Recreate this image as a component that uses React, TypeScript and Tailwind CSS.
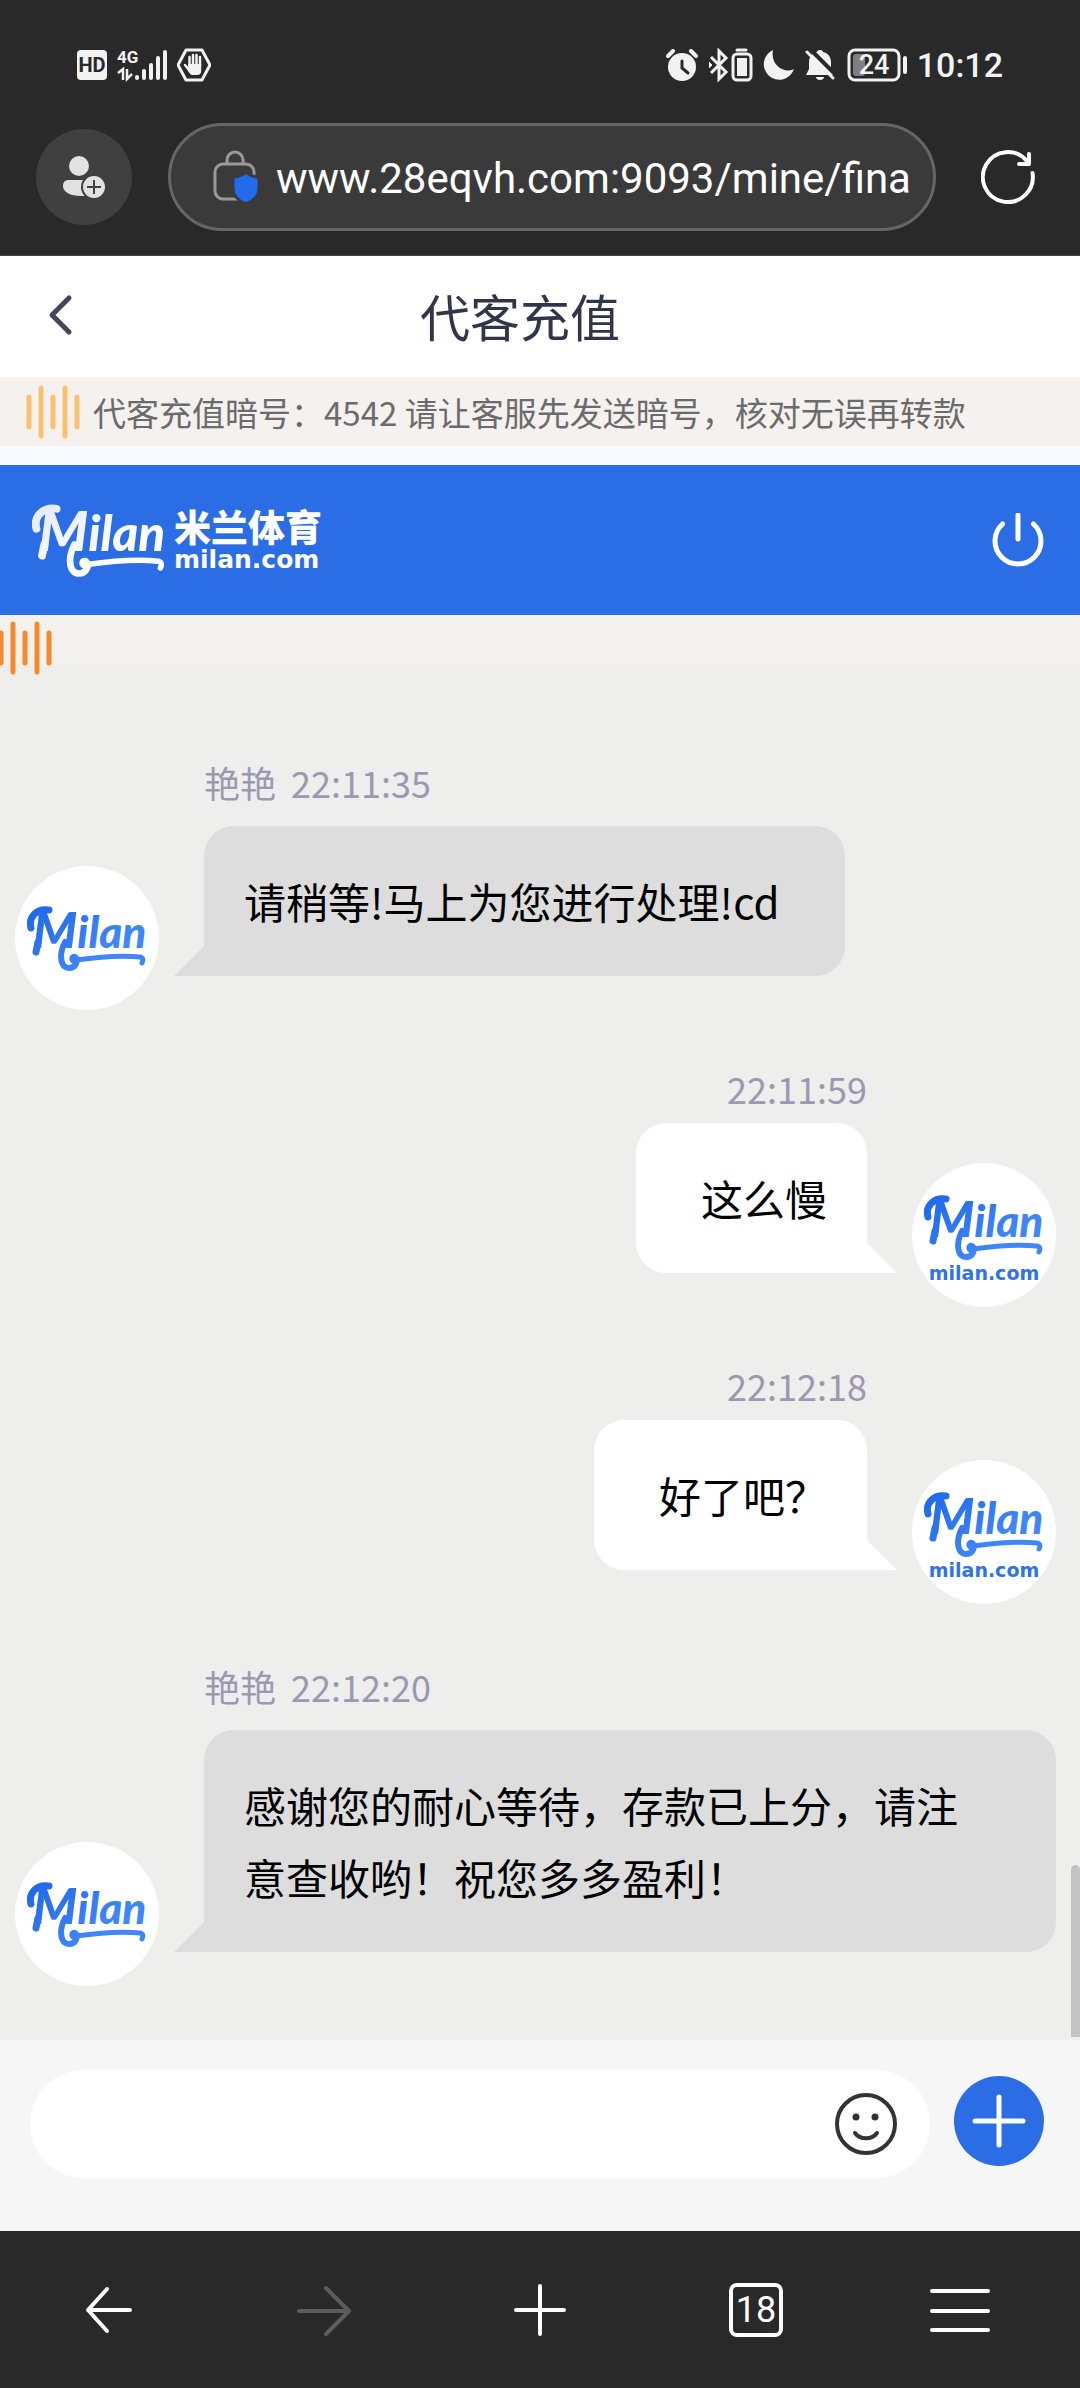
type Message = {
  id: number;
  from: "agent" | "me";
  name?: string;
  time: string;
  text: string;
};

const messages: Message[] = [
  { id: 1, from: "agent", name: "艳艳", time: "22:11:35", text: "请稍等!马上为您进行处理!cd" },
  { id: 2, from: "me", time: "22:11:59", text: "这么慢" },
  { id: 3, from: "me", time: "22:12:18", text: "好了吧？" },
  { id: 4, from: "agent", name: "艳艳", time: "22:12:20", text: "感谢您的耐心等待，存款已上分，请注意查收哟！祝您多多盈利！" },
];

function MilanMark({ className, fill }: { className: string; fill: string }) {
  return (
    <svg viewBox="0 -8 120 84" className={className} fill={fill} role="img" aria-label="Milan">
      <defs>
        <linearGradient id="milan-blue" gradientUnits="userSpaceOnUse" x1="0" y1="0" x2="50" y2="68">
          <stop offset="0" stopColor="#1b66ea" />
          <stop offset="1" stopColor="#4087f5" />
        </linearGradient>
        <linearGradient id="milan-white" gradientUnits="userSpaceOnUse" x1="0" y1="0" x2="50" y2="68">
          <stop offset="0" stopColor="#e3eafa" />
          <stop offset="1" stopColor="#ffffff" />
        </linearGradient>
      </defs>
      <text x="6" y="44" fontFamily="Lato, sans-serif" fontWeight="900" fontStyle="italic" fontSize="44">
        <tspan fontSize="50">M</tspan>
        <tspan>ilan</tspan>
      </text>
      <g fill="none" stroke={fill} strokeLinecap="round" strokeLinejoin="round">
        <path d="M4 24C1 13 10 4 22 6" strokeWidth="7" />
        <path d="M11 38L9 48" strokeWidth="7" />
        <path d="M38 38C31 52 34 64 42 64C49 64 52 56 48 53C45 52 44 56 48 57" strokeWidth="6" />
        <path d="M49 56C70 53 95 51 113 53C117 54 116 57 115 59" strokeWidth="5" />
      </g>
    </svg>
  );
}

function Avatar({ withDomain }: { withDomain?: boolean }) {
  return (
    <div className="flex h-36 w-36 shrink-0 flex-col items-center justify-center rounded-full bg-white">
      <MilanMark className="h-[84px] w-[120px]" fill="url(#milan-blue)" />
      {withDomain ? (
        <span className="-mt-2 text-[19px] leading-6 font-bold text-[#2f73e6] font-['DejaVu_Sans',sans-serif]">milan.com</span>
      ) : null}
    </div>
  );
}

function SoundBars({ color, className }: { color: string; className: string }) {
  return (
    <svg viewBox="0 0 54 54" className={className} stroke={color} strokeWidth="5" strokeLinecap="round" aria-hidden="true">
      <path d="M3 12v30M15 3v48M27 12v30M39 3v48M51 12v30" />
    </svg>
  );
}

function StatusBar() {
  return (
    <div className="flex h-[123px] items-center justify-between px-[77px] pt-[7px] text-[#f2f2f2]">
      <div className="flex items-center">
        <span className="flex h-[30px] w-[30px] items-center justify-center rounded bg-[#f2f2f2] text-[20px] leading-none font-bold text-[#292929]">
          HD
        </span>
        <svg viewBox="0 0 52 34" className="ml-[10px] h-[34px] w-[52px]" aria-hidden="true">
          <text x="0" y="15" fontSize="17" fontWeight="700" fill="currentColor" fontFamily="Roboto, sans-serif">4G</text>
          <g stroke="currentColor" strokeLinecap="round" strokeWidth="4" fill="none">
            <path d="M20 29v1M27 23v7M34 17v13M41 10v20M48 4v26" />
          </g>
          <path d="M1 25l5-4v11M10 21v10l5-5" stroke="currentColor" strokeWidth="2.500" fill="none" />
        </svg>
        <svg viewBox="0 0 34 34" className="ml-2 h-[34px] w-[34px]" fill="none" stroke="currentColor" strokeLinecap="round" strokeLinejoin="round" aria-hidden="true">
          <path d="M9 2h16l8 15-8 15H9L1 17z" strokeWidth="3" />
          <path d="M12.500 17V9M16 16V7M19.500 16V7M23 17V9M12 22l-4-5" strokeWidth="2.500" />
          <path d="M11.500 16h12.700v7c0 3-2 4-4 4h-4c-3 0-4-2-6-6z" fill="currentColor" stroke="none" />
        </svg>
      </div>
      <div className="flex items-center">
        <svg viewBox="0 0 32 32" className="h-8 w-8" aria-hidden="true">
          <circle cx="16" cy="18" r="14" fill="currentColor" />
          <path d="M2 7l5-5M30 7l-5-5" stroke="currentColor" strokeWidth="4" strokeLinecap="round" />
          <path d="M16 12v7l6 5" stroke="#292929" strokeWidth="3" strokeLinecap="round" fill="none" />
        </svg>
        <svg viewBox="0 0 44 34" className="ml-[11px] h-[34px] w-11" fill="none" stroke="currentColor" aria-hidden="true">
          <path d="M2 9l15 15-7 7V3l7 7L2 25" strokeWidth="3" />
          <path d="M0 14l3 3-3 3z" fill="currentColor" strokeWidth="1" />
          <path d="M28 2h9" strokeWidth="3" strokeLinecap="round" />
          <rect x="24" y="6" width="18" height="26" rx="4" strokeWidth="3" />
          <rect x="28" y="10" width="10" height="18" fill="currentColor" stroke="none" />
        </svg>
        <svg viewBox="0 0 32 32" className="ml-[9px] h-8 w-8" fill="currentColor" aria-hidden="true">
          <path d="M11 1A15.500 15.500 0 1 0 32 20C23 25 8 17 11 1z" />
        </svg>
        <svg viewBox="0 0 30 32" className="ml-[11px] h-8 w-[30px]" aria-hidden="true">
          <path d="M15 1c2 0 3 1 3 2 5 1 8 5 8 10v7l3 6H1l3-6v-7c0-5 3-9 8-10 0-1 1-2 3-2z" fill="currentColor" />
          <path d="M11 28h8c0 4-8 4-8 0z" fill="currentColor" />
          <path d="M5 0l26 26" stroke="#292929" strokeWidth="4" />
          <path d="M2 3l26 26" stroke="currentColor" strokeWidth="3" strokeLinecap="round" />
        </svg>
        <svg viewBox="0 0 62 34" className="ml-3 h-[34px] w-[62px]" aria-hidden="true">
          <rect x="2" y="2" width="50" height="30" rx="6" fill="none" stroke="currentColor" strokeWidth="3" />
          <rect x="6" y="6" width="12" height="22" rx="3" fill="#808080" />
          <path d="M58 10v14" stroke="currentColor" strokeWidth="4" strokeLinecap="round" />
          <text x="27" y="26" textAnchor="middle" fontSize="27" fontWeight="500" fill="currentColor" fontFamily="Roboto, sans-serif">24</text>
        </svg>
        <span className="ml-2 text-[34px] leading-none font-medium">10:12</span>
      </div>
    </div>
  );
}

function BrowserBar() {
  return (
    <div className="flex items-center pr-[45px] pb-6 pl-9">
      <button type="button" aria-label="账户" className="flex h-24 w-24 shrink-0 items-center justify-center rounded-full bg-[#404040]">
        <svg viewBox="0 0 44 44" className="h-11 w-11" aria-hidden="true">
          <circle cx="17" cy="11" r="10" fill="#e2e2e2" />
          <path d="M7 25h20v16h-8C8 41 1 37 1 31c0-4 2-6 6-6z" fill="#e2e2e2" />
          <circle cx="32" cy="32" r="12" fill="#e2e2e2" stroke="#404040" strokeWidth="2" />
          <path d="M32 25v14M25 32h14" stroke="#404040" strokeWidth="2" />
        </svg>
      </button>
      <div className="ml-9 flex h-[108px] min-w-0 flex-1 items-center rounded-full border-[3px] border-[#666] bg-[#3a3a3a] pr-6 pl-[42px]">
        <svg viewBox="0 0 48 54" className="h-[54px] w-12 shrink-0" aria-hidden="true">
          <rect x="2" y="14" width="39" height="35" rx="8" fill="none" stroke="#999" strokeWidth="3" />
          <path d="M14 14V10a8 8 0 0 1 16 0v4" fill="none" stroke="#999" strokeWidth="3" />
          <path d="M33 22c4 4 8 5 13 5v12c0 6-5 12-13 15-8-3-13-9-13-15V27c5 0 9-1 13-5z" fill="#226aee" stroke="#3a3a3a" strokeWidth="3" />
        </svg>
        <input
          aria-label="网址"
          defaultValue="www.28eqvh.com:9093/mine/fina"
          className="ml-[15px] min-w-0 flex-1 bg-transparent pt-1 text-[42px] leading-[56px] text-white outline-none"
        />
      </div>
      <button type="button" aria-label="刷新" className="ml-[45px] shrink-0 text-white">
        <svg viewBox="0 0 54 54" className="h-[54px] w-[54px]" fill="none" stroke="currentColor" strokeWidth="4" strokeLinecap="round" strokeLinejoin="round" aria-hidden="true">
          <path d="M51.500 23A25 25 0 1 1 46 11" />
          <path d="M48 4v10H38" />
        </svg>
      </button>
    </div>
  );
}

function ChatMessage({ message }: { message: Message }) {
  if (message.from === "me") {
    return (
      <li className="flex items-end justify-end gap-[45px]">
        <div className="flex flex-col items-end pb-[34px]">
          <div className="mb-[9px] text-[36px] leading-[51px] text-[#9c98b0]">{message.time}</div>
          <div className="relative rounded-[30px] rounded-br-none bg-white py-[39px] pr-10 pl-[65px] text-[42px] leading-[72px] text-black">
            {message.text}
            <svg viewBox="0 0 30 30" className="absolute bottom-0 left-full h-[30px] w-[30px] fill-white" aria-hidden="true">
              <path d="M0 0l30 30H0z" />
            </svg>
          </div>
        </div>
        <Avatar withDomain />
      </li>
    );
  }
  return (
    <li className="flex items-end gap-[45px]">
      <Avatar />
      <div className="flex min-w-0 flex-col items-start pt-1 pb-[34px]">
        <div className="mb-[18px] flex gap-[15px] text-[36px] leading-[51px] text-[#9c98b0]">
          <span>{message.name}</span>
          <span>{message.time}</span>
        </div>
        <div className="relative rounded-[30px] rounded-bl-none bg-[#ddd] py-[39px] pr-[65px] pl-10 text-[42px] leading-[72px] text-black">
          {message.text}
          <svg viewBox="0 0 30 30" className="absolute right-full bottom-0 h-[30px] w-[30px] fill-[#ddd]" aria-hidden="true">
            <path d="M30 0v30H0z" />
          </svg>
        </div>
      </div>
    </li>
  );
}

function NavBar() {
  return (
    <nav className="grid h-[157px] grid-cols-5 items-center justify-items-center bg-[#292929] font-['Roboto',sans-serif] text-white">
      <button type="button" aria-label="后退">
        <svg viewBox="0 0 54 54" className="h-[54px] w-[54px]" fill="none" stroke="currentColor" strokeWidth="4" strokeLinecap="round" strokeLinejoin="round" aria-hidden="true">
          <path d="M49 27H7M26 6L7 27l19 21" />
        </svg>
      </button>
      <button type="button" aria-label="前进" className="text-[#5c5c5c]">
        <svg viewBox="0 0 54 54" className="h-[54px] w-[54px]" fill="none" stroke="currentColor" strokeWidth="4" strokeLinecap="round" strokeLinejoin="round" aria-hidden="true">
          <path d="M2 28h50M29 5l23 23-23 23" />
        </svg>
      </button>
      <button type="button" aria-label="新建标签页">
        <svg viewBox="0 0 54 54" className="h-[54px] w-[54px]" fill="none" stroke="currentColor" strokeWidth="4" strokeLinecap="round" aria-hidden="true">
          <path d="M27 3v48M3 27h48" />
        </svg>
      </button>
      <button type="button" className="flex h-[54px] w-[54px] items-center justify-center rounded-lg border-4 border-white text-[36px] leading-none">
        18
      </button>
      <button type="button" aria-label="菜单" className="pr-6">
        <svg viewBox="0 0 60 54" className="h-[54px] w-[60px]" fill="none" stroke="currentColor" strokeWidth="4" strokeLinecap="round" aria-hidden="true">
          <path d="M2 8h56M2 28h56M2 47h56" />
        </svg>
      </button>
    </nav>
  );
}

export default function App() {
  return (
    <div className="flex min-h-screen flex-col bg-[#eeeeec] font-['Noto_Sans_CJK_SC',sans-serif]">
      <header className="border-b border-[#444] bg-[#292929] font-['Roboto',sans-serif]">
        <StatusBar />
        <BrowserBar />
      </header>

      <div className="flex h-[121px] items-center bg-white pb-1">
        <button type="button" aria-label="返回" className="pl-[46px]">
          <svg viewBox="0 0 28 42" className="h-[42px] w-7" fill="none" stroke="#414757" strokeWidth="5" strokeLinecap="round" strokeLinejoin="round" aria-hidden="true">
            <path d="M23 4L6 21l17 17" />
          </svg>
        </button>
        <h1 className="flex-1 pr-[114px] text-center text-[50px] leading-[72px] text-[#32354a]">代客充值</h1>
      </div>

      <div className="flex h-[69px] items-center bg-[#f4f1ee] pl-[26px]">
        <SoundBars color="#f9c270" className="h-[54px] w-[54px] shrink-0" />
        <p className="ml-[13px] text-[33px] leading-[48px] text-[#6b6b6b]">代客充值暗号：4542 请让客服先发送暗号，核对无误再转款</p>
      </div>

      <div className="h-[19px] bg-[#f7faff]" />

      <div className="flex h-[150px] items-center justify-between bg-[#2b6de5] pr-[35px] pl-8">
        <div className="flex items-center gap-2 text-white">
          <MilanMark className="h-[94px] w-[134px]" fill="url(#milan-white)" />
          <div className="pb-1">
            <div className="text-[37px] leading-[44px] font-black">米兰体育</div>
            <div className="text-[25px] leading-6 font-bold font-['DejaVu_Sans',sans-serif]">milan.com</div>
          </div>
        </div>
        <button type="button" aria-label="退出" className="text-white">
          <svg viewBox="0 0 54 54" className="h-[54px] w-[54px]" fill="none" stroke="currentColor" strokeWidth="5" strokeLinecap="round" aria-hidden="true">
            <path d="M27 2v24M11.500 11a23 23 0 1 0 31 0" />
          </svg>
        </button>
      </div>

      <div className="h-[49px] bg-[#f4f1ee] pt-[6px]">
        <SoundBars color="#f58a2c" className="relative -ml-[2px] h-[54px] w-[54px]" />
      </div>

      <main className="relative flex-1 pt-[89px] pr-6 pb-[53px] pl-[15px]">
        <ul className="flex flex-col gap-[53px]">
          {messages.map((message) => (
            <ChatMessage key={message.id} message={message} />
          ))}
        </ul>
        <div className="absolute right-0 bottom-[3px] h-[172px] w-[9px] rounded-t-full bg-[#c3c3c3]" />
      </main>

      <form className="flex items-start gap-6 bg-[#f6f6f6] pt-[30px] pr-9 pb-[53px] pl-[30px]">
        <div className="flex h-[108px] min-w-0 flex-1 items-center rounded-full bg-white pr-8 pl-12">
          <input aria-label="消息" className="min-w-0 flex-1 bg-transparent text-[42px] outline-none" />
          <button type="button" aria-label="表情">
            <svg viewBox="0 0 64 64" className="h-16 w-16" fill="none" stroke="#333" strokeWidth="4" strokeLinecap="round" aria-hidden="true">
              <circle cx="32" cy="32" r="29" />
              <path d="M21 41c5 7 17 7 22 0" />
              <circle cx="22" cy="25" r="3.500" fill="#333" stroke="none" />
              <circle cx="41" cy="25" r="3.500" fill="#333" stroke="none" />
            </svg>
          </button>
        </div>
        <button type="button" aria-label="更多" className="mt-[6px] flex h-[90px] w-[90px] items-center justify-center rounded-full bg-[#2b6de5] text-white">
          <svg viewBox="0 0 54 54" className="h-[54px] w-[54px]" stroke="currentColor" strokeWidth="5" strokeLinecap="round" aria-hidden="true">
            <path d="M27 3v48M3 27h48" />
          </svg>
        </button>
      </form>

      <NavBar />
    </div>
  );
}
